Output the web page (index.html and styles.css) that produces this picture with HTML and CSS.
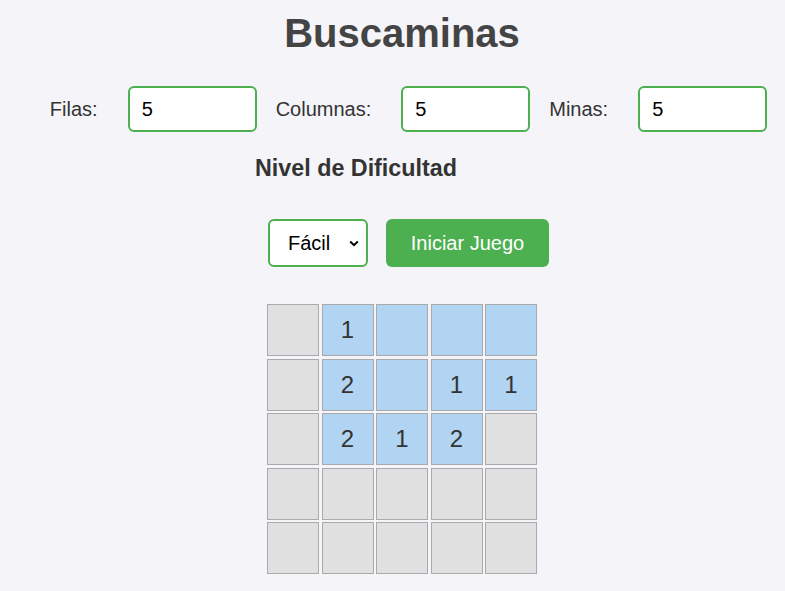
FILE: index.html
```html
<!DOCTYPE html>
<html lang="es">
<head>
<meta charset="utf-8">
<title>Buscaminas</title>
<link rel="stylesheet" href="styles.css">
</head>
<body>
<main class="app">
  <h1 class="title">Buscaminas</h1>
  <div class="settings">
    <label class="label" for="filas">Filas:</label>
    <input class="field" id="filas" type="number" value="5">
    <label class="label" for="columnas">Columnas:</label>
    <input class="field" id="columnas" type="number" value="5">
    <label class="label" for="minas">Minas:</label>
    <input class="field" id="minas" type="number" value="5">
  </div>
  <div class="difficulty">
    <h3 class="subtitle">Nivel de Dificultad</h3>
    <div class="actions">
      <span class="select-wrap">
        <select class="select">
          <option>Fácil</option>
          <option>Medio</option>
          <option>Difícil</option>
        </select>
        <svg class="chevron" width="10" height="7" viewBox="0 0 10 7"><path d="M1.2 1.5 L5 5.2 L8.8 1.5" fill="none" stroke="#000" stroke-width="2"/></svg>
      </span>
      <button class="start">Iniciar Juego</button>
    </div>
  </div>
  <div class="board">
    <div class="cell"></div>
    <div class="cell open">1</div>
    <div class="cell open"></div>
    <div class="cell open"></div>
    <div class="cell open"></div>

    <div class="cell"></div>
    <div class="cell open">2</div>
    <div class="cell open"></div>
    <div class="cell open">1</div>
    <div class="cell open">1</div>

    <div class="cell"></div>
    <div class="cell open">2</div>
    <div class="cell open">1</div>
    <div class="cell open">2</div>
    <div class="cell"></div>

    <div class="cell"></div>
    <div class="cell"></div>
    <div class="cell"></div>
    <div class="cell"></div>
    <div class="cell"></div>

    <div class="cell"></div>
    <div class="cell"></div>
    <div class="cell"></div>
    <div class="cell"></div>
    <div class="cell"></div>
  </div>
</main>
</body>
</html>
```
FILE: styles.css
```css
html, body {
  margin: 0;
  padding: 0;
  background: #f4f4f9;
  font-family: "Liberation Sans", Arial, sans-serif;
  color: #333;
}

.app {
  display: flex;
  flex-direction: column;
  align-items: center;
  padding-left: 19px;
}

.title {
  margin: 10px 0 0;
  font-size: 40px;
  font-weight: bold;
  color: #444;
  line-height: 46px;
}

.settings {
  display: flex;
  align-items: center;
  margin-top: 30px;
  padding-left: 13px;
}

.label {
  font-size: 20px;
  color: #333;
  margin-right: 30px;
}

.field {
  box-sizing: border-box;
  width: 129px;
  height: 46px;
  padding: 0 12px;
  border: 2px solid #4caf50;
  border-radius: 6px;
  background: #fff;
  font-family: "Liberation Sans", Arial, sans-serif;
  font-size: 20px;
  color: #000;
  outline: none;
  margin-right: 19px;
  -moz-appearance: textfield;
}

.field:last-child {
  margin-right: 0;
}

.field::-webkit-outer-spin-button,
.field::-webkit-inner-spin-button {
  -webkit-appearance: none;
  margin: 0;
}

.difficulty {
  display: flex;
  flex-direction: column;
  align-items: flex-start;
  margin-top: 23px;
}

.subtitle {
  margin: 0;
  font-size: 23.3px;
  font-weight: bold;
  color: #333;
  line-height: 26px;
}

.actions {
  display: flex;
  align-items: center;
  gap: 18px;
  margin-top: 38px;
  margin-left: 13px;
}

.select-wrap {
  position: relative;
  display: block;
}

.select {
  box-sizing: border-box;
  width: 100px;
  height: 48px;
  padding: 0 0 0 18px;
  border: 2px solid #4caf50;
  border-radius: 6px;
  background: #fff;
  font-family: "Liberation Sans", Arial, sans-serif;
  font-size: 20px;
  color: #000;
  -webkit-appearance: none;
  appearance: none;
  outline: none;
  display: block;
}

.chevron {
  position: absolute;
  left: 81px;
  top: 21px;
  pointer-events: none;
}

.start {
  box-sizing: border-box;
  width: 163px;
  height: 48px;
  padding: 0;
  border: none;
  border-radius: 6px;
  background: #4caf50;
  color: #fff;
  font-family: "Liberation Sans", Arial, sans-serif;
  font-size: 20px;
  cursor: pointer;
}

.board {
  display: grid;
  grid-template-columns: repeat(5, 52px);
  grid-auto-rows: 52px;
  gap: 2.5px;
  margin-top: 37px;
}

.cell {
  box-sizing: border-box;
  border: 1px solid #aaa;
  background: #e0e0e0;
  display: flex;
  align-items: center;
  justify-content: center;
  font-size: 24px;
  color: #333;
}

.cell.open {
  background: #b0d4f1;
}
```
